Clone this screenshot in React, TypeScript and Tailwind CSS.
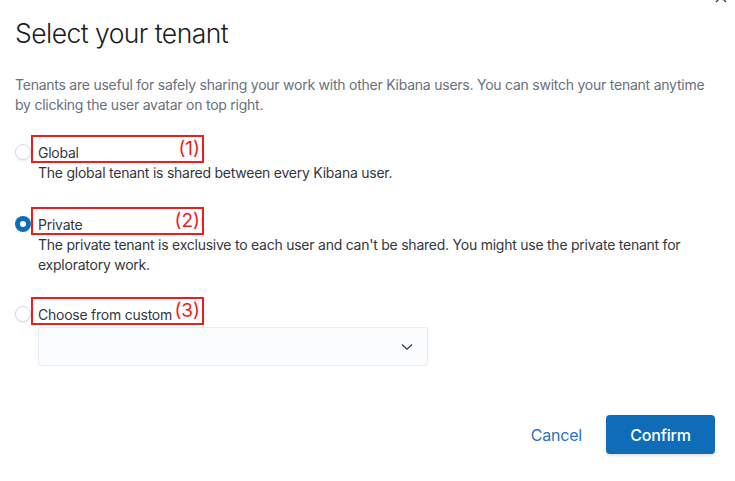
import React from "react";

function Radio({ checked }: { checked?: boolean }) {
  return checked ? (
    <span className="flex h-[16px] w-[16px] shrink-0 items-center justify-center rounded-full bg-[#0f6cb9]">
      <span className="block h-[6px] w-[6px] rounded-full bg-white" />
    </span>
  ) : (
    <span className="block h-[16px] w-[16px] shrink-0 rounded-full border border-[#d3dae6] bg-white shadow-[0_1px_2px_rgba(0,0,0,0.08)]" />
  );
}

function Option({
  checked,
  label,
  num,
}: {
  checked?: boolean;
  label: string;
  num: string;
}) {
  return (
    <div className="flex items-start">
      <div className="flex pt-[9px]">
        <Radio checked={checked} />
      </div>
      <div className="flex h-[28px] w-[173px] shrink-0 items-stretch justify-between border-2 border-[#ee1c1c] pl-[5px] pr-[2px]">
        <span className="mb-[-1px] self-end whitespace-nowrap text-[14px] leading-[18px] tracking-[-0.24px] text-[#343741]">
          {label}
        </span>
        <span className="self-center whitespace-nowrap text-[19px] leading-[20px] text-[#ee1c1c]">
          {num}
        </span>
      </div>
    </div>
  );
}

export default function App() {
  return (
    <div
      className="relative h-[481px] w-[735px] overflow-hidden bg-white pl-[15px]"
      style={{ fontFamily: "Inter, 'Liberation Sans', sans-serif" }}
    >
      <svg
        className="absolute right-[8px] top-[-9px]"
        width="12"
        height="12"
        viewBox="0 0 12 12"
      >
        <path d="M1 1L11 11M11 1L1 11" stroke="#343741" strokeWidth="1.3" />
      </svg>

      <h1 className="pt-[17px] text-[26.5px] font-light leading-[32px] tracking-[-0.55px] text-[#1a1c21]">
        Select your tenant
      </h1>

      <p className="mt-[26px] w-[700px] text-[14px] leading-[20px] tracking-[-0.24px] text-[#69707d]">
        Tenants are useful for safely sharing your work with other Kibana users.
        You can switch your tenant anytime by clicking the user avatar on top
        right.
      </p>

      <div className="mt-[20px]">
        <Option label="Global" num="(1)" />
        <p className="ml-[23px] text-[14px] leading-[20px] tracking-[-0.24px] text-[#343741]">
          The global tenant is shared between every Kibana user.
        </p>
      </div>

      <div className="mt-[24px]">
        <Option checked label="Private" num="(2)" />
        <p className="ml-[23px] w-[680px] text-[14px] leading-[20px] tracking-[-0.24px] text-[#343741]">
          The private tenant is exclusive to each user and can't be shared. You
          might use the private tenant for exploratory work.
        </p>
      </div>

      <div className="mt-[22px]">
        <Option label="Choose from custom" num="(3)" />
        <div className="ml-[23px] mt-[2px] flex h-[39px] w-[390px] items-center justify-end rounded-[2px] border border-[#e9edf3] bg-[#fbfcfd] pr-[14px]">
          <svg width="12" height="8" viewBox="0 0 12 8">
            <path
              d="M1 1.5L6 6.2L11 1.5"
              fill="none"
              stroke="#343741"
              strokeWidth="1.2"
            />
          </svg>
        </div>
      </div>

      <div className="mt-[49px] flex items-center justify-end gap-[24px] pr-[20px]">
        <button className="text-[16px] leading-[20px] tracking-[-0.2px] text-[#2a72c0]">
          Cancel
        </button>
        <button className="h-[39px] w-[109px] rounded-[4px] bg-[#0f6cb9] text-[16px] font-medium tracking-[-0.2px] text-white shadow-[0_2px_3px_rgba(0,0,0,0.12)]">
          Confirm
        </button>
      </div>
    </div>
  );
}
